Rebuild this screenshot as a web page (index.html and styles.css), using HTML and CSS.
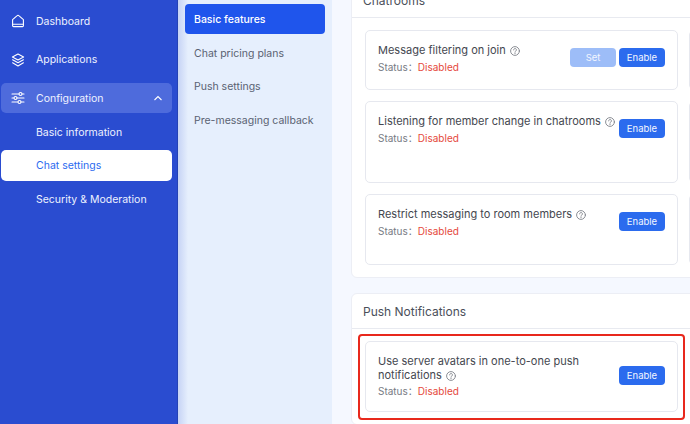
FILE: index.html
```html
<!DOCTYPE html>
<html lang="en">
<head>
    <meta charset="UTF-8">
    <meta name="viewport" content="width=device-width, initial-scale=1.0">
    <title>Chat settings</title>
    <link rel="stylesheet" href="styles.css">
</head>
<body>

<svg class="icon-defs" aria-hidden="true">
    <symbol id="help" viewBox="0 0 10 10">
        <circle cx="5" cy="5" r="4.4"/>
        <path d="M3.6 3.9a1.4 1.4 0 1 1 2.2 1.1c-.5.4-.8.6-.8 1.1"/>
        <path d="M5 7.2v.5"/>
    </symbol>
</svg>

<div class="app">
    <nav class="sidebar">
        <a class="nav-item">
            <svg class="nav-icon" viewBox="0 0 14 14"><path d="M1.6 5.6 5.9 1.8a1.6 1.6 0 0 1 2.2 0l4.3 3.8v6.1a.9.9 0 0 1-.9.9H2.5a.9.9 0 0 1-.9-.9z"/><path d="M1.6 10.3h10.8"/></svg>
            Dashboard
        </a>
        <a class="nav-item">
            <svg class="nav-icon" viewBox="0 0 14 14"><path d="M7 1 12.6 4 7 7 1.4 4z"/><path d="M1.6 6.8 7 9.8l5.4-3"/><path d="M1.6 9.8 7 12.9l5.4-3.1"/></svg>
            Applications
        </a>
        <a class="nav-item nav-open">
            <svg class="nav-icon" viewBox="0 0 14 14"><path d="M1 3h7M11 3h2M1 7h2M6 7h7M1 11h6M10 11h3"/><circle cx="9.5" cy="3" r="1.5"/><circle cx="4.5" cy="7" r="1.5"/><circle cx="8.5" cy="11" r="1.5"/></svg>
            Configuration
            <svg class="nav-caret" viewBox="0 0 10 6"><path d="M1.5 5 5 1.5 8.5 5"/></svg>
        </a>
        <a class="sub-item">Basic information</a>
        <a class="sub-item sub-active">Chat settings</a>
        <a class="sub-item">Security &amp; Moderation</a>
    </nav>

    <aside class="subnav">
        <a class="subnav-item subnav-active">Basic features</a>
        <a class="subnav-item">Chat pricing plans</a>
        <a class="subnav-item">Push settings</a>
        <a class="subnav-item">Pre-messaging callback</a>
    </aside>

    <main class="main">
        <section class="panel panel-scrolled">
            <h2 class="panel-title">Chatrooms</h2>
            <div class="card-grid">
                <div class="card card-short">
                    <div class="card-row">
                        <div class="card-text">
                            <div class="card-name">Message filtering on join <svg class="help"><use href="#help"/></svg></div>
                            <div class="status">Status：<span class="status-off">Disabled</span></div>
                        </div>
                        <div class="actions">
                            <button class="btn btn-muted">Set</button>
                            <button class="btn">Enable</button>
                        </div>
                    </div>
                </div>
                <div class="card card-short"></div>
                <div class="card card-tall">
                    <div class="card-row">
                        <div class="card-text">
                            <div class="card-name">Listening for member change in chatrooms <svg class="help"><use href="#help"/></svg></div>
                            <div class="status">Status：<span class="status-off">Disabled</span></div>
                        </div>
                        <div class="actions">
                            <button class="btn">Enable</button>
                        </div>
                    </div>
                </div>
                <div class="card card-tall"></div>
                <div class="card">
                    <div class="card-row">
                        <div class="card-text">
                            <div class="card-name">Restrict messaging to room members <svg class="help"><use href="#help"/></svg></div>
                            <div class="status">Status：<span class="status-off">Disabled</span></div>
                        </div>
                        <div class="actions">
                            <button class="btn">Enable</button>
                        </div>
                    </div>
                </div>
                <div class="card"></div>
            </div>
        </section>

        <section class="panel">
            <h2 class="panel-title">Push Notifications</h2>
            <div class="card-grid">
                <div class="card card-marked">
                    <div class="card-row">
                        <div class="card-text card-text-narrow">
                            <div class="card-name">Use server avatars in one-to-one push notifications <svg class="help"><use href="#help"/></svg></div>
                            <div class="status">Status：<span class="status-off">Disabled</span></div>
                        </div>
                        <div class="actions">
                            <button class="btn">Enable</button>
                        </div>
                    </div>
                </div>
            </div>
        </section>
    </main>
</div>

</body>
</html>
```

FILE: styles.css
```css
* {
    box-sizing: border-box;
}

body {
    margin: 0;
    font-family: 'Inter', 'Noto Sans CJK SC', sans-serif;
    background-color: #f5f8ff;
    overflow: hidden;
}

.icon-defs {
    display: none;
}

.app {
    display: flex;
    height: 100vh;
    overflow: hidden;
}

/* Left blue menu */
.sidebar {
    flex: 0 0 178px;
    display: flex;
    flex-direction: column;
    padding: 6px 5px 0 1px;
    background-color: #2a4cd0;
    border-right: 1px solid #2442b5;
}

.nav-item {
    display: flex;
    align-items: center;
    height: 30px;
    margin-bottom: 8.5px;
    padding: 0 10px;
    border-radius: 5px;
    color: #eef2ff;
    font-size: 10.5px;
}

.nav-open {
    margin-bottom: 3px;
    background-color: #4e6bdc;
}

.nav-icon {
    flex: none;
    width: 14px;
    height: 14px;
    margin-right: 11px;
    fill: none;
    stroke: #fff;
    stroke-width: 1.1;
    stroke-linejoin: round;
    stroke-linecap: round;
}

.nav-caret {
    width: 10px;
    height: 6px;
    margin-left: auto;
    margin-right: -1px;
    fill: none;
    stroke: #fff;
    stroke-width: 1.1;
}

.sub-item {
    display: flex;
    align-items: center;
    height: 31px;
    margin-bottom: 2.5px;
    padding: 1px 0 0 35px;
    border-radius: 5px;
    color: #eef2ff;
    font-size: 10.5px;
}

.sub-active {
    background-color: #fff;
    color: #2b6af0;
}

/* Second level menu */
.subnav {
    flex: 0 0 154px;
    display: flex;
    flex-direction: column;
    padding: 4px 7px 0;
    background: linear-gradient(to right, #c6d3f5, #e6effd 10px);
}

.subnav-item {
    display: flex;
    align-items: center;
    flex: 0 0 30px;
    margin-bottom: 3.5px;
    padding-left: 9px;
    border-radius: 4px;
    color: #5a6272;
    font-size: 10.5px;
}

.subnav-active {
    margin-bottom: 4px;
    background-color: #1f55ec;
    color: #fff;
    font-weight: 500;
}

/* Content */
.main {
    flex: 1;
    min-width: 0;
    padding-left: 19px;
}

.panel {
    width: 665px;
    margin-bottom: 15px;
    background-color: #fff;
    border: 1px solid #eceef5;
    border-radius: 6px;
}

.panel-scrolled {
    margin-top: -18px;
}

.panel-title {
    display: flex;
    align-items: center;
    height: 35px;
    margin: 0;
    padding-left: 11px;
    border-bottom: 1px solid #e8eaf0;
    color: #4a4f5a;
    font-size: 12px;
    font-weight: 400;
}

.card-grid {
    display: grid;
    grid-template-columns: 313px 313px;
    gap: 11px;
    padding: 12px 13px;
}

.card {
    height: 71px;
    padding: 13px 12px;
    border: 1px solid #e6e8ef;
    border-radius: 5px;
}

.card-short {
    height: 60px;
}

.card-tall {
    height: 82px;
}

/* red frame drawn over the screenshot */
.card-marked {
    position: relative;
}

.card-marked::after {
    content: "";
    position: absolute;
    inset: -8px -8px -9px -8px;
    border: 2px solid #e8281c;
    border-radius: 4px;
}

.card-row {
    display: flex;
    align-items: center;
    justify-content: space-between;
}

.card-text {
    flex: 1;
    min-width: 0;
}

.card-text-narrow {
    padding-right: 24px;
}

.card-name {
    color: #44474f;
    font-size: 11px;
    line-height: 13.5px;
}

.help {
    width: 10px;
    height: 10px;
    margin-left: 1px;
    fill: none;
    stroke: #7f828a;
    stroke-width: .9;
    stroke-linecap: round;
    vertical-align: -2px;
}

.status {
    margin-top: 3px;
    color: #777b84;
    font-size: 10px;
    line-height: 12px;
}

.status-off {
    color: #e5483c;
}

.actions {
    display: flex;
    flex: none;
    gap: 3px;
    margin-bottom: 1px;
}

.btn {
    width: 46px;
    height: 19px;
    padding: 0;
    border: none;
    border-radius: 4px;
    background-color: #2b6bee;
    color: #f2f6ff;
    font-family: inherit;
    font-size: 9.5px;
}

.btn-muted {
    background-color: #9dbdf8;
}
```
